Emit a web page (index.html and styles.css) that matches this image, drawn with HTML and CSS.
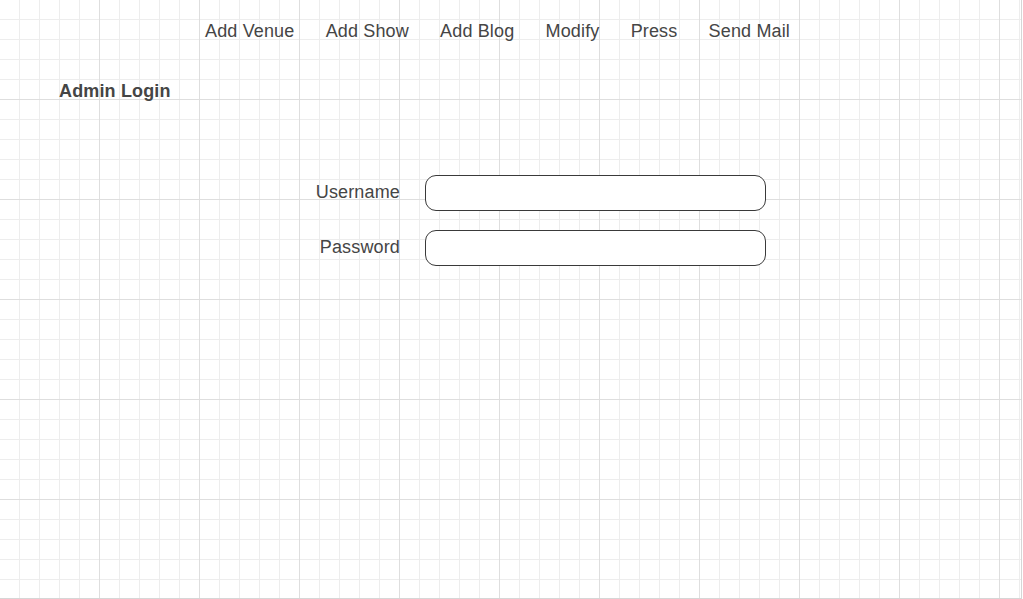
FILE: index.html
```html
<!DOCTYPE html>
<html lang="en">
<head>
<meta charset="utf-8">
<title>Admin Login</title>
<link rel="stylesheet" href="styles.css">
</head>
<body>
<div class="canvas">
  <nav class="nav">
    <a class="nav-item">Add Venue</a>
    <a class="nav-item">Add Show</a>
    <a class="nav-item">Add Blog</a>
    <a class="nav-item">Modify</a>
    <a class="nav-item">Press</a>
    <a class="nav-item">Send Mail</a>
  </nav>
  <h1 class="title">Admin Login</h1>
  <form class="login">
    <div class="row">
      <label class="label">Username</label>
      <div class="field"></div>
    </div>
    <div class="row">
      <label class="label">Password</label>
      <div class="field"></div>
    </div>
  </form>
</div>
</body>
</html>
```
FILE: styles.css
```css
html, body {
  margin: 0;
  padding: 0;
  background: #ffffff;
}
body {
  font-family: "Liberation Sans", Arial, sans-serif;
  color: #454545;
  letter-spacing: 0.15px;
}
.canvas {
  box-sizing: border-box;
  width: 1022px;
  height: 599px;
  border-right: 1px solid #d6d6d6;
  border-bottom: 1px solid #d6d6d6;
  background-color: #ffffff;
  background-image:
    linear-gradient(to right, transparent 99px, #dedede 99px),
    linear-gradient(to bottom, transparent 99px, #dedede 99px),
    linear-gradient(to right, transparent 19px, #ededed 19px),
    linear-gradient(to bottom, transparent 19px, #ededed 19px);
  background-size: 100px 100px, 100px 100px, 20px 20px, 20px 20px;
  overflow: hidden;
}
.nav {
  display: flex;
  gap: 31.2px;
  padding: 21px 0 0 205px;
  font-size: 18px;
  line-height: 20px;
}
.nav-item {
  color: #454545;
  text-decoration: none;
}
.title {
  margin: 40px 0 0 59px;
  font-size: 18px;
  line-height: 20px;
  font-weight: bold;
  color: #454545;
}
.login {
  display: flex;
  flex-direction: column;
  gap: 19px;
  margin: 74px 0 0 0;
}
.row {
  display: flex;
  align-items: center;
  gap: 25px;
}
.label {
  width: 400px;
  padding-bottom: 2px;
  text-align: right;
  font-size: 18px;
  line-height: 20px;
  color: #454545;
}
.field {
  box-sizing: border-box;
  width: 341px;
  height: 36px;
  border: 1px solid #3a3a3a;
  border-radius: 11px;
  background: #ffffff;
}
```
